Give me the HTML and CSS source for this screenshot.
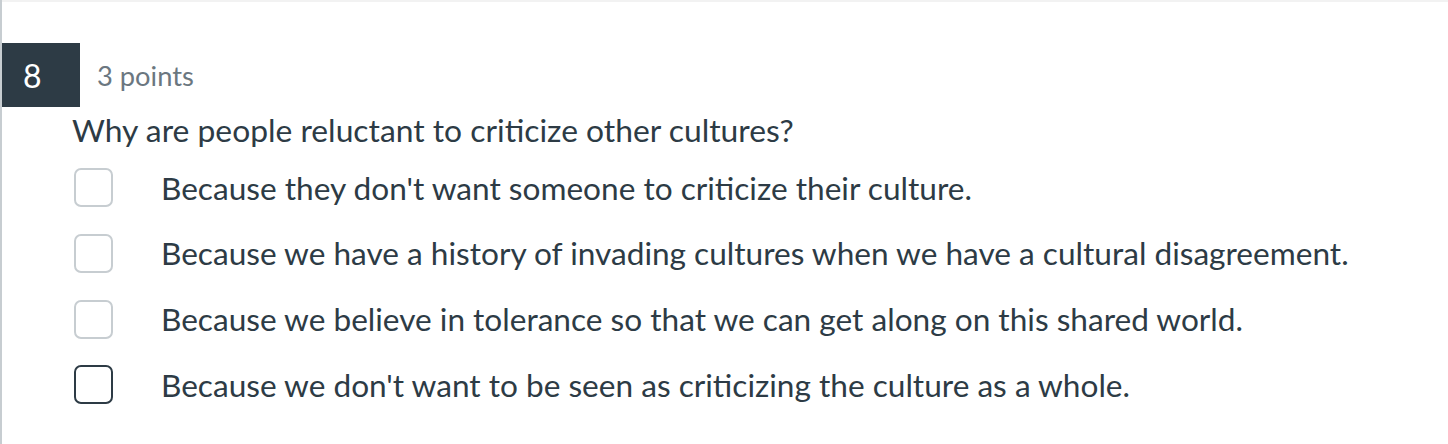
FILE: index.html
```html
<!DOCTYPE html>
<html>
<head>
<meta charset="utf-8">
<link rel="stylesheet" href="styles.css">
</head>
<body>
<div class="page">
  <div class="question">
    <div class="header">
      <div class="num">8</div>
      <div class="points">3 points</div>
    </div>
    <div class="text">Why are people reluctant to criticize other cultures?</div>
    <ul class="answers">
      <li class="answer"><span class="box"></span><span class="label">Because they don't want someone to criticize their culture.</span></li>
      <li class="answer"><span class="box"></span><span class="label">Because we have a history of invading cultures when we have a cultural disagreement.</span></li>
      <li class="answer"><span class="box"></span><span class="label">Because we believe in tolerance so that we can get along on this shared world.</span></li>
      <li class="answer"><span class="box focus"></span><span class="label">Because we don't want to be seen as criticizing the culture as a whole.</span></li>
    </ul>
  </div>
</div>
</body>
</html>
```

FILE: styles.css
```css
html, body {
  margin: 0;
  padding: 0;
  background: #fff;
}
body {
  font-family: Lato, "Open Sans", sans-serif;
  color: #2d3b45;
}
.page {
  height: 444px;
  box-sizing: border-box;
  border-left: 2px solid #c7cdd1;
}
.question {
  border-top: 2px solid #f2f2f2;
  padding-top: 41px;
}
.header {
  display: flex;
  align-items: center;
  height: 64px;
}
.num {
  width: 78px;
  height: 64px;
  background: #2d3b45;
  color: #fff;
  font-size: 32px;
  display: flex;
  align-items: center;
  box-sizing: border-box;
  padding-left: 21px;
}
.points {
  margin-left: 17px;
  font-size: 27.3px;
  color: #6b7780;
}
.text {
  margin-left: 70px;
  font-size: 31.8px;
  line-height: 50px;
  margin-top: -2px;
}
.answers {
  list-style: none;
  margin: 0;
  padding: 0 0 0 72px;
}
.answer {
  display: flex;
  align-items: center;
  height: 65.67px;
}
.box {
  width: 39px;
  height: 39px;
  box-sizing: border-box;
  border: 2px solid #c7cdd1;
  border-radius: 7px;
  flex: none;
}
.box.focus {
  border-color: #2d3b45;
}
.label {
  margin-left: 48px;
  font-size: 31.6px;
}
```
